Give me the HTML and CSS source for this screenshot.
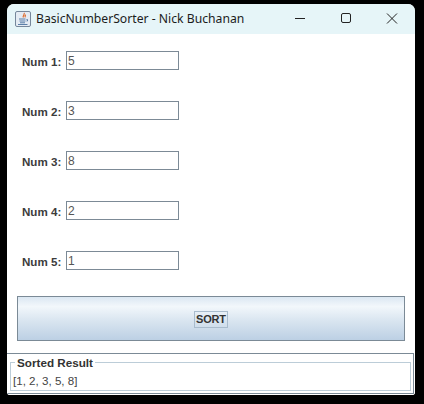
FILE: index.html
```html
<!DOCTYPE html>
<html lang="en">
<head>
<meta charset="utf-8">
<title>BasicNumberSorter - Nick Buchanan</title>
<link rel="stylesheet" href="styles.css">
</head>
<body>
<div class="window">
  <header class="titlebar">
    <svg class="app-icon" width="16" height="16" viewBox="0 0 16 16">
      <rect x="0.5" y="0.5" width="15" height="15" rx="1.500" fill="#e4ebf3" stroke="#76879b"/>
      <path d="M9 2c1.300 1.500-1.800 2.500-.6 4.500M10.800 3.800c-1.100.8-1.100 1.500-.4 2.500" fill="none" stroke="#dd6a2c" stroke-width="1.200"/>
      <path d="M4 8h6.500M11.500 8.500h1V10h-1M4.500 10h6M5 11.800h5M3 13.500h9.500" fill="none" stroke="#5b7fa8" stroke-width="1"/>
    </svg>
    <span class="title">BasicNumberSorter - Nick Buchanan</span>
    <div class="controls">
      <svg class="ctl" width="46" height="30" viewBox="0 0 46 30"><path d="M18 14.500h10" stroke="#222" fill="none"/></svg>
      <svg class="ctl" width="46" height="30" viewBox="0 0 46 30"><rect x="18.500" y="9.500" width="9" height="9" rx="1.500" stroke="#222" fill="none"/></svg>
      <svg class="ctl" width="46" height="30" viewBox="0 0 46 30"><path d="M18 9.500l10 10M28 9.500l-10 10" stroke="#222" fill="none"/></svg>
    </div>
  </header>
  <main class="content">
    <div class="fields">
      <div class="row"><label class="label">Num 1:</label><div class="input">5</div></div>
      <div class="row"><label class="label">Num 2:</label><div class="input">3</div></div>
      <div class="row"><label class="label">Num 3:</label><div class="input">8</div></div>
      <div class="row"><label class="label">Num 4:</label><div class="input">2</div></div>
      <div class="row"><label class="label">Num 5:</label><div class="input">1</div></div>
    </div>
    <div class="button-wrap">
      <button class="sort"><span class="sort-text">SORT</span></button>
    </div>
    <section class="result-panel">
      <fieldset class="result">
        <legend class="legend">Sorted Result</legend>
        <div class="result-text">[1, 2, 3, 5, 8]</div>
      </fieldset>
    </section>
  </main>
</div>
</body>
</html>
```
FILE: styles.css
```css
* { box-sizing: border-box; }
html, body { margin: 0; padding: 0; }
body {
  width: 424px;
  height: 404px;
  background: #000;
  padding: 4px 0 0 7px;
  overflow: hidden;
  font-family: "Liberation Sans", Arial, sans-serif;
  color: #333;
}
.window {
  width: 408px;
  height: 391px;
  background: #fff;
  border-radius: 7px 7px 3px 3px;
  overflow: hidden;
  display: flex;
  flex-direction: column;
}
.titlebar {
  height: 30px;
  flex: none;
  background: #e6f5f8;
  display: flex;
  align-items: center;
  padding-left: 8px;
}
.app-icon { flex: none; margin-bottom: 1px; }
.title {
  margin-left: 5px;
  margin-bottom: 2px;
  font-family: "Noto Sans", "Open Sans", sans-serif;
  font-size: 12.200px;
  color: #1c1c1c;
  white-space: nowrap;
}
.controls { margin-left: auto; display: flex; align-self: flex-start; }
.ctl { display: block; }
.content { flex: 1; display: flex; flex-direction: column; background: #fff; }
.fields {
  padding: 17px 0 0 15px;
  display: flex;
  flex-direction: column;
  gap: 31px;
}
.row { display: flex; align-items: center; height: 19px; }
.label {
  font-size: 11.600px;
  font-weight: 700;
  color: #3c3c3c;
  width: 44px;
  padding-top: 1px;
  white-space: nowrap;
}
.input {
  width: 113px;
  height: 19px;
  border: 1px solid #7c8a96;
  background: #fff;
  font-size: 12px;
  line-height: 18px;
  padding-left: 1px;
  color: #555;
}
.button-wrap { padding: 26px 10px 0 10px; }
.sort {
  display: flex;
  align-items: center;
  justify-content: center;
  width: 388px;
  height: 45px;
  padding: 0;
  border: 1px solid #7b8a96;
  background: linear-gradient(#dbe7f2 0%, #f2f7fb 22%, #d9e5f0 55%, #bcd0e4 100%);
  font-family: "Liberation Sans", Arial, sans-serif;
}
.sort-text {
  font-size: 11px;
  font-weight: 700;
  letter-spacing: -0.2px;
  color: #333;
  line-height: 15px;
  padding: 0 1px;
  margin-top: 1px;
  border: 1px solid #a9bccd;
}
.result-panel {
  margin-top: 12px;
  margin-right: 1px;
  height: 41px;
  border-top: 1px solid #7b8a96;
  border-right: 1px solid #7b8a96;
  border-bottom: 1px solid #7b8a96;
  padding: 1px 2px 0 3px;
}
.result {
  margin: 0;
  padding: 0 0 0 2px;
  height: 36px;
  border: 1px solid #bccdd8;
  min-width: 0;
}
.legend {
  font-size: 11.700px;
  font-weight: 700;
  color: #333;
  padding: 1px 2px 0;
  margin-left: 2px;
  line-height: 14px;
}
.result-text { font-size: 11.600px; line-height: 14px; color: #444; margin-top: 4px; }
```
